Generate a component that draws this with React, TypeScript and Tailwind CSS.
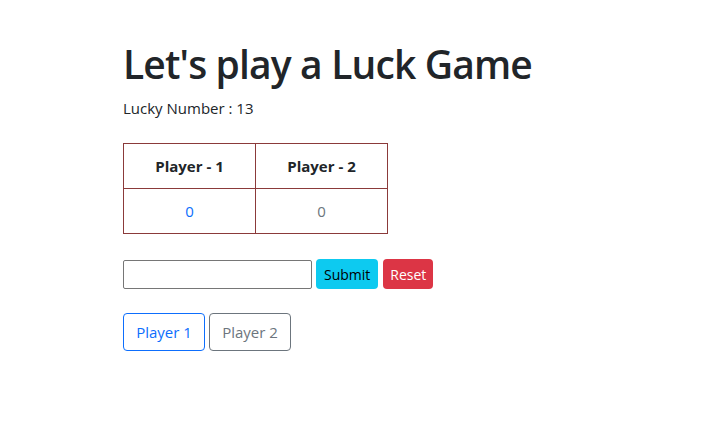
export default function App() {
  return (
    <div className="min-h-screen bg-white font-['Open_Sans',sans-serif] text-[#212529]">
      <div className="pl-[123px] pt-[40px]">
        {/* Title */}
        <h1 className="text-[39px] leading-[48px] font-semibold tracking-[-0.85px]">Let's play a Luck Game</h1>
        <p className="mt-[8px] text-[15px] leading-[24px]">Lucky Number : 13</p>

        {/* Scoreboard */}
        <table className="mt-[23px] border-collapse border border-[#8b3a3a] text-[15px]">
          <thead>
            <tr>
              <th className="w-[132px] h-[45px] border border-[#8b3a3a] font-bold">Player - 1</th>
              <th className="w-[132px] h-[45px] border border-[#8b3a3a] font-bold">Player - 2</th>
            </tr>
          </thead>
          <tbody>
            <tr>
              <td className="h-[45px] border border-[#8b3a3a] text-center text-[#0d6efd]">0</td>
              <td className="h-[45px] border border-[#8b3a3a] text-center text-[#6c757d]">0</td>
            </tr>
          </tbody>
        </table>

        {/* Guess form */}
        <div className="mt-[25px] flex items-center">
          <input type="text" className="w-[189px] h-[29px] border border-[#767676] rounded-[2px] outline-none" />
          <button className="ml-[4px] h-[30px] px-[8px] rounded-[4px] bg-[#0dcaf0] text-[14px] text-black">Submit</button>
          <button className="ml-[5px] h-[30px] px-[7px] rounded-[4px] bg-[#dc3545] text-[14px] text-white">Reset</button>
        </div>

        {/* Turn selector */}
        <div className="mt-[24px] flex gap-[4px]">
          <button className="h-[38px] w-[82px] rounded-[4px] border border-[#0d6efd] text-[15px] text-[#0d6efd]">Player 1</button>
          <button className="h-[38px] w-[82px] rounded-[4px] border border-[#6c757d] text-[15px] text-[#6c757d]">Player 2</button>
        </div>
      </div>
    </div>
  );
}
